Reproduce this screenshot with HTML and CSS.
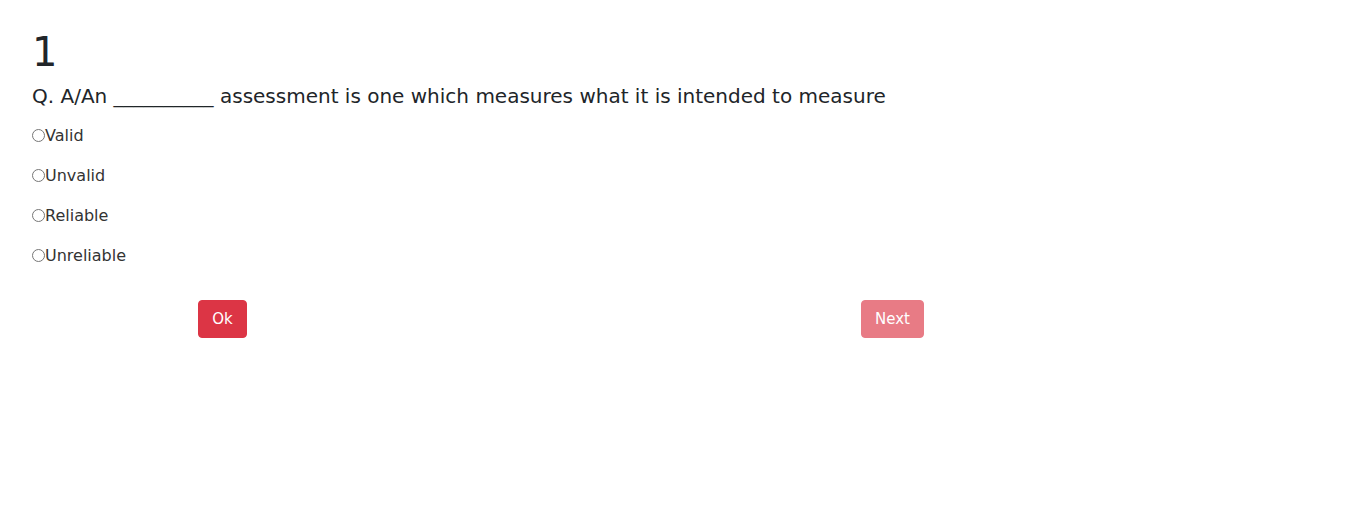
FILE: index.html
```html
<!DOCTYPE html>
<html>
<head>
<meta charset="utf-8">
<link rel="stylesheet" href="styles.css">
</head>
<body>
<div class="quiz">
  <h1 class="qnum">1</h1>
  <h2 class="question">Q. A/An __________ assessment is one which measures what it is intended to measure</h2>
  <div class="options">
    <label class="opt"><input type="radio" name="a"><span>Valid</span></label>
    <label class="opt"><input type="radio" name="a"><span>Unvalid</span></label>
    <label class="opt"><input type="radio" name="a"><span>Reliable</span></label>
    <label class="opt"><input type="radio" name="a"><span>Unreliable</span></label>
  </div>
  <div class="actions">
    <button class="btn ok">Ok</button>
    <button class="btn next" disabled>Next</button>
  </div>
</div>
</body>
</html>
```
FILE: styles.css
```css
html, body {
  margin: 0;
  padding: 0;
  background: #fff;
}
body {
  font-family: "DejaVu Sans", sans-serif;
  color: #212529;
}
.quiz {
  padding: 28px 32px 0 32px;
}
.qnum {
  margin: 0;
  font-size: 40px;
  font-weight: 400;
  line-height: 48px;
}
.question {
  margin: 8px 0 0 0;
  font-size: 20px;
  font-weight: 400;
  line-height: 24px;
}
.options {
  display: flex;
  flex-direction: column;
  margin-top: 7px;
}
.opt {
  display: flex;
  align-items: center;
  height: 40px;
  font-size: 16px;
  color: #333;
}
.opt input {
  margin: 0;
  width: 13px;
  height: 13px;
}
.actions {
  display: flex;
  margin-top: 25px;
}
.btn {
  font-family: inherit;
  font-size: 15px;
  color: #fff;
  background: #dc3545;
  border: 1px solid #dc3545;
  border-radius: 4px;
  height: 38px;
  padding: 0 12px;
}
.ok {
  margin-left: 166px;
  width: 49px;
}
.next {
  margin-left: 614px;
  width: 63px;
  opacity: .65;
}
```
